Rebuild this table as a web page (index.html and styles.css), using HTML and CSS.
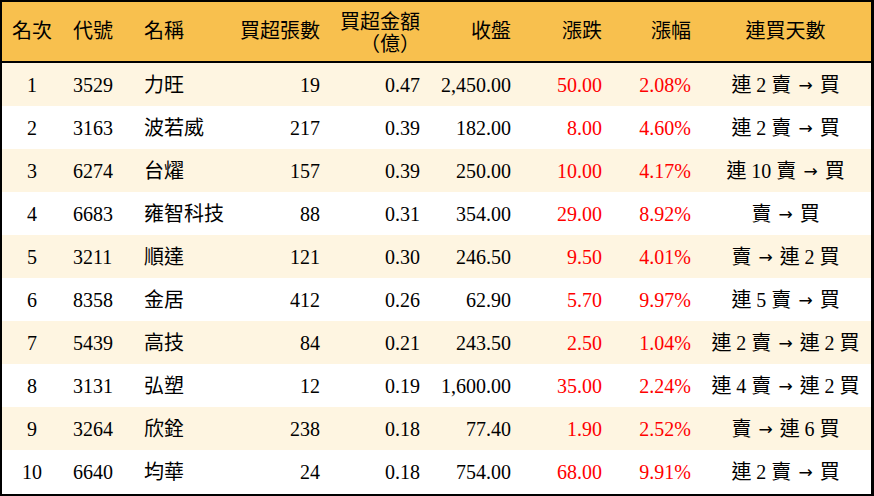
FILE: index.html
```html
<!DOCTYPE html>
<html lang="zh-Hant">
<head>
<meta charset="utf-8">
<title>買超排行</title>
<link rel="stylesheet" href="styles.css">
</head>
<body>
<div class="board">
<table class="rank">
<colgroup>
<col class="c-rank"><col class="c-code"><col class="c-name"><col class="c-vol"><col class="c-amt"><col class="c-close"><col class="c-chg"><col class="c-pct"><col class="c-streak">
</colgroup>
<thead>
<tr>
<th class="ctr">名次</th>
<th class="lft">代號</th>
<th class="lft">名稱</th>
<th class="rgt">買超張數</th>
<th class="rgt two">買超金額<br>（億）</th>
<th class="rgt pr9">收盤</th>
<th class="rgt">漲跌</th>
<th class="rgt pr9">漲幅</th>
<th class="ctr">連買天數</th>
</tr>
</thead>
<tbody>
<tr><td class="ctr">1</td><td class="lft">3529</td><td class="lft">力旺</td><td class="rgt">19</td><td class="rgt">0.47</td><td class="rgt pr9">2,450.00</td><td class="rgt up">50.00</td><td class="rgt pr9 up">2.08%</td><td class="ctr">連 2 賣 <span class="arrow">→</span> 買</td></tr>
<tr><td class="ctr">2</td><td class="lft">3163</td><td class="lft">波若威</td><td class="rgt">217</td><td class="rgt">0.39</td><td class="rgt pr9">182.00</td><td class="rgt up">8.00</td><td class="rgt pr9 up">4.60%</td><td class="ctr">連 2 賣 <span class="arrow">→</span> 買</td></tr>
<tr><td class="ctr">3</td><td class="lft">6274</td><td class="lft">台燿</td><td class="rgt">157</td><td class="rgt">0.39</td><td class="rgt pr9">250.00</td><td class="rgt up">10.00</td><td class="rgt pr9 up">4.17%</td><td class="ctr">連 10 賣 <span class="arrow">→</span> 買</td></tr>
<tr><td class="ctr">4</td><td class="lft">6683</td><td class="lft">雍智科技</td><td class="rgt">88</td><td class="rgt">0.31</td><td class="rgt pr9">354.00</td><td class="rgt up">29.00</td><td class="rgt pr9 up">8.92%</td><td class="ctr">賣 <span class="arrow">→</span> 買</td></tr>
<tr><td class="ctr">5</td><td class="lft">3211</td><td class="lft">順達</td><td class="rgt">121</td><td class="rgt">0.30</td><td class="rgt pr9">246.50</td><td class="rgt up">9.50</td><td class="rgt pr9 up">4.01%</td><td class="ctr">賣 <span class="arrow">→</span> 連 2 買</td></tr>
<tr><td class="ctr">6</td><td class="lft">8358</td><td class="lft">金居</td><td class="rgt">412</td><td class="rgt">0.26</td><td class="rgt pr9">62.90</td><td class="rgt up">5.70</td><td class="rgt pr9 up">9.97%</td><td class="ctr">連 5 賣 <span class="arrow">→</span> 買</td></tr>
<tr><td class="ctr">7</td><td class="lft">5439</td><td class="lft">高技</td><td class="rgt">84</td><td class="rgt">0.21</td><td class="rgt pr9">243.50</td><td class="rgt up">2.50</td><td class="rgt pr9 up">1.04%</td><td class="ctr">連 2 賣 <span class="arrow">→</span> 連 2 買</td></tr>
<tr><td class="ctr">8</td><td class="lft">3131</td><td class="lft">弘塑</td><td class="rgt">12</td><td class="rgt">0.19</td><td class="rgt pr9">1,600.00</td><td class="rgt up">35.00</td><td class="rgt pr9 up">2.24%</td><td class="ctr">連 4 賣 <span class="arrow">→</span> 連 2 買</td></tr>
<tr><td class="ctr">9</td><td class="lft">3264</td><td class="lft">欣銓</td><td class="rgt">238</td><td class="rgt">0.18</td><td class="rgt pr9">77.40</td><td class="rgt up">1.90</td><td class="rgt pr9 up">2.52%</td><td class="ctr">賣 <span class="arrow">→</span> 連 6 買</td></tr>
<tr><td class="ctr">10</td><td class="lft">6640</td><td class="lft">均華</td><td class="rgt">24</td><td class="rgt">0.18</td><td class="rgt pr9">754.00</td><td class="rgt up">68.00</td><td class="rgt pr9 up">9.91%</td><td class="ctr">連 2 賣 <span class="arrow">→</span> 買</td></tr>
</tbody>
</table>
</div>
</body>
</html>
```
FILE: styles.css
```css
html, body {
  margin: 0;
  padding: 0;
  background: #ffffff;
}

.board {
  width: 874px;
  height: 496px;
  box-sizing: border-box;
  border-top: 2px solid #000;
  border-left: 2px solid #000;
  border-bottom: 2px solid #000;
  border-right: 3px solid #000;
  overflow: hidden;
}

.rank {
  width: 869px;
  border-collapse: separate;
  border-spacing: 0;
  table-layout: fixed;
  font-family: "Liberation Serif", "Noto Sans CJK TC", serif;
  font-size: 20px;
  color: #000;
}

.c-rank { width: 60px; }
.c-code { width: 73px; }
.c-name { width: 95px; }
.c-vol { width: 100px; }
.c-amt { width: 100px; }
.c-close { width: 90px; }
.c-chg { width: 92px; }
.c-pct { width: 88px; }
.c-streak { width: 171px; }

.rank th {
  box-sizing: border-box;
  background: #f8c04e;
  height: 61px;
  padding: 0 10px 0 0;
  font-weight: normal;
  line-height: 21px;
  border-bottom: 2px solid #000;
  white-space: nowrap;
}

.rank th.two {
  line-height: 22px;
  padding-top: 2px;
}

.rank td {
  box-sizing: border-box;
  height: 43px;
  padding: 0 10px 0 0;
  line-height: 22px;
  white-space: nowrap;
}

.rank tbody tr:last-child td {
  height: 44px;
}

.rank tbody tr:nth-child(odd) td {
  background: #fef5e1;
}

.rank tbody tr:nth-child(even) td {
  background: #ffffff;
}

.rank .ctr {
  text-align: center;
  padding: 0;
}

.rank .lft {
  text-align: left;
  padding: 0 0 0 11px;
}

.rank td.lft + td.lft,
.rank th.lft + th.lft {
  padding-left: 9px;
}

.rank .rgt {
  text-align: right;
}

.rank .pr9 {
  padding-right: 9px;
}

.rank .up {
  color: #ff0000;
}

.arrow {
  display: inline-block;
  font-family: "DejaVu Sans", sans-serif;
  font-size: 17px;
  line-height: 10px;
  margin: 0 2px;
  vertical-align: 1px;
}
```
